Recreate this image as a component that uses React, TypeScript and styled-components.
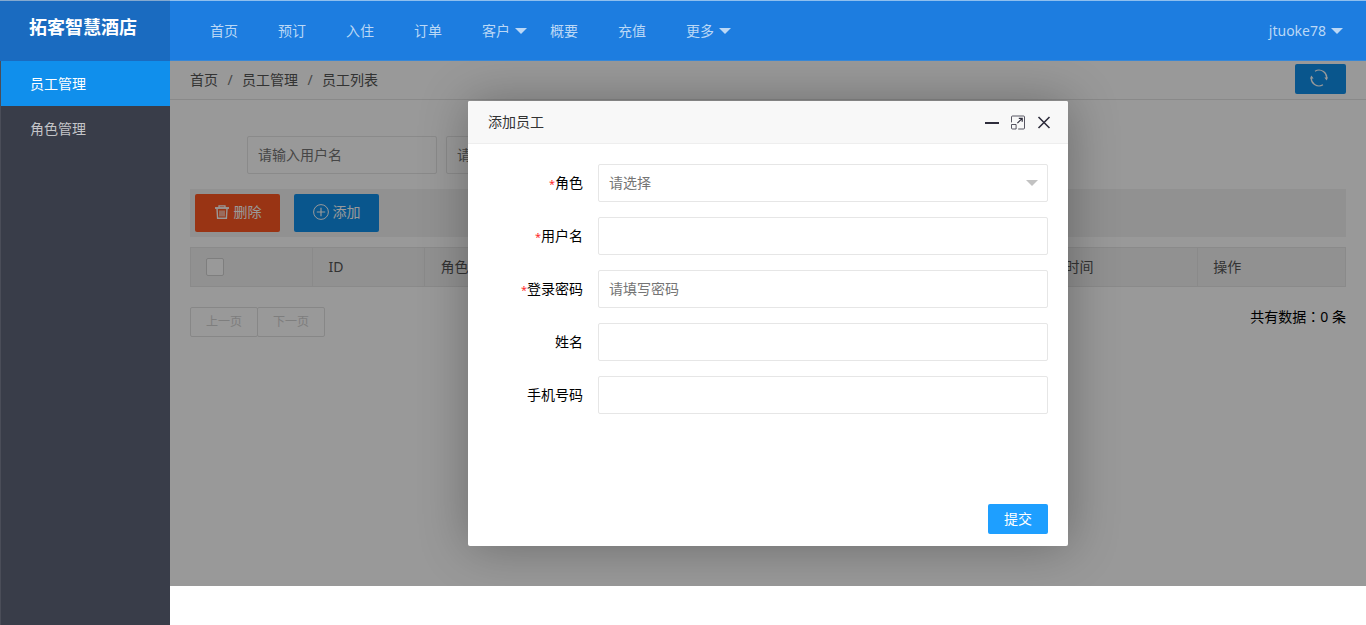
import React from "react";
import styled, { createGlobalStyle } from "styled-components";

const GlobalStyle = createGlobalStyle`
  *, *::before, *::after { box-sizing: border-box; }
  body {
    margin: 0;
    background: #fff;
    color: #000;
    font-family: "Noto Sans", "Noto Sans CJK SC", sans-serif;
    font-size: 14px;
    line-height: 24px;
  }
  button, input, select { font: inherit; margin: 0; }
  a { color: inherit; text-decoration: none; }
  ul, ol { list-style: none; margin: 0; padding: 0; }
`;

const Page = styled.div`
  display: grid;
  grid-template-columns: 170px minmax(0, 1fr);
  grid-template-rows: 61px minmax(525px, 1fr) 39px;
  min-height: 100vh;
`;

const Logo = styled.div`
  padding: 12px 29px 0;
  border-top: 1px solid #84a9cf;
  background: #1a6bc0;
  color: #fff;
  font-size: 18px;
  font-weight: 700;
  line-height: 28px;
  white-space: nowrap;
`;

const Header = styled.header`
  display: flex;
  justify-content: space-between;
  border-top: 1px solid #8fbfee;
  border-bottom: 1px solid #3787d6;
  background: #1d7de0;
  color: #bbd8f6;
`;

const NavList = styled.ul`
  display: flex;
  padding: 0 20px;
`;

const NavLink = styled.a<{ $more?: boolean }>`
  display: flex;
  align-items: center;
  gap: 5px;
  height: 100%;
  padding: 0 ${(p) => (p.$more ? 3 : 20)}px 0 20px;
`;

const Sidebar = styled.nav`
  grid-row: 2 / 4;
  border-left: 1px solid #4a4d58;
  background: #393d49;
`;

const SideLink = styled.a<{ $active?: boolean }>`
  display: block;
  padding: 0 29px;
  background: ${(p) => (p.$active ? "#108fec" : "transparent")};
  color: ${(p) => (p.$active ? "#fff" : "#c4c5c8")};
  line-height: 45px;
`;

const Content = styled.main`
  position: relative;
  overflow: hidden;
  background: #fff;
`;

const CrumbBar = styled.div`
  display: flex;
  justify-content: space-between;
  align-items: flex-start;
  height: 39px;
  padding: 3px 20px 0;
  border-bottom: 1px solid #e5e5e5;
`;

const Crumbs = styled.ol`
  display: flex;
  color: #555;
  line-height: 32px;

  li + li::before {
    content: "/";
    display: inline-block;
    width: 24px;
    text-align: center;
    color: #777;
  }
`;

const RefreshButton = styled.button`
  display: flex;
  align-items: center;
  justify-content: center;
  width: 51px;
  height: 30px;
  padding: 0 3px 2px 0;
  border: 0;
  border-radius: 2px;
  background: #1090ec;
  color: #fff;
`;

const Body = styled.div`
  padding: 36px 20px 20px;
`;

const SearchForm = styled.form`
  display: flex;
  gap: 9px;
  padding: 0 57px;
`;

const Field = styled.input`
  height: 38px;
  padding: 0 10px 2px;
  border: 1px solid #e6e6e6;
  border-radius: 2px;
  background: #fff;
  color: #333;
  &::placeholder { color: #757575; opacity: 1; }
`;

const SearchField = styled(Field)`
  width: 190px;
`;

const Toolbar = styled.div`
  display: flex;
  gap: 14px;
  margin: 15px 0 10px;
  padding: 5px;
  background: #f2f2f2;
`;

const ToolButton = styled.button<{ $danger?: boolean }>`
  display: flex;
  align-items: center;
  justify-content: center;
  gap: 4px;
  width: 85px;
  height: 38px;
  padding: 0 0 2px;
  border: 0;
  border-radius: 2px;
  background: ${(p) => (p.$danger ? "#ff5722" : "#1090ec")};
  color: #fff;
`;

const Table = styled.table`
  width: 100%;
  table-layout: fixed;
  border-collapse: collapse;
  background: #f2f2f2;
  color: #555;
`;

const HeadCell = styled.th`
  height: 39px;
  padding: 0 15px;
  border: 1px solid #e6e6e6;
  font-weight: 400;
  text-align: left;
`;

const Check = styled.input`
  display: block;
  appearance: none;
  width: 18px;
  height: 18px;
  margin: 0;
  border: 1px solid #d2d2d2;
  border-radius: 2px;
  background: #fff;
`;

const TableFooter = styled.div`
  display: flex;
  justify-content: space-between;
  align-items: flex-start;
  padding-top: 20px;
`;

const Pager = styled.div`
  display: flex;
`;

const PageButton = styled.button`
  width: 68px;
  height: 30px;
  padding: 0;
  border: 1px solid #e2e2e2;
  border-radius: 2px;
  background: #fff;
  color: #d2d2d2;
  font-size: 12px;
  & + & { margin-left: -1px; }
`;

const Total = styled.span`
  font-family: "Noto Sans", "Noto Sans CJK TC", sans-serif;
  line-height: 20px;
`;

const Mask = styled.div`
  position: absolute;
  inset: 0;
  display: flex;
  align-items: center;
  justify-content: center;
  background: rgba(0, 0, 0, 0.4);
`;

const Dialog = styled.section`
  display: flex;
  flex-direction: column;
  width: 600px;
  min-height: 445px;
  border-radius: 2px;
  background: #fff;
  box-shadow: 1px 1px 50px rgba(0, 0, 0, 0.3);
`;

const DialogHead = styled.div`
  display: flex;
  align-items: center;
  justify-content: space-between;
  height: 43px;
  padding: 0 15px 0 20px;
  border-bottom: 1px solid #eee;
  border-radius: 2px 2px 0 0;
  background: #f8f8f8;
`;

const DialogTitle = styled.h2`
  margin: 0;
  color: #333;
  font-size: 14px;
  font-weight: 400;
`;

const WindowButtons = styled.div`
  display: flex;
  gap: 8px;
`;

const WindowButton = styled.button`
  display: flex;
  width: 18px;
  height: 18px;
  padding: 0;
  border: 0;
  background: none;
  color: #2e2d3c;
`;

const DialogForm = styled.form`
  display: flex;
  flex: 1;
  flex-direction: column;
  gap: 15px;
  padding: 20px 20px 12px;
`;

const FormRow = styled.div`
  display: grid;
  grid-template-columns: 95px minmax(0, 1fr);
  column-gap: 15px;
  align-items: center;
`;

const Label = styled.label`
  text-align: right;
`;

const Required = styled.span`
  color: #ff2a2a;
  font-size: 11px;
`;

const SelectBox = styled.div`
  display: grid;
  align-items: center;

  > * { grid-area: 1 / 1; }
  > svg { justify-self: end; margin-right: 10px; color: #c2c2c2; pointer-events: none; }
`;

const Select = styled.select`
  appearance: none;
  width: 100%;
  height: 38px;
  padding: 0 10px 1px;
  border: 1px solid #e6e6e6;
  border-radius: 2px;
  background: #fff;
  color: #757575;
`;

const Submit = styled.button`
  align-self: flex-end;
  width: 60px;
  height: 30px;
  margin-top: auto;
  padding: 0 0 1px;
  border: 0;
  border-radius: 2px;
  background: #1e9fff;
  color: #fff;
`;

const Caret = () => (
  <svg width="12" height="6" viewBox="0 0 12 6" fill="currentColor" aria-hidden="true">
    <path d="M0 0h12L6 6z" />
  </svg>
);

const RefreshIcon = () => (
  <svg width="18" height="18" viewBox="0 0 18 18" fill="none" stroke="currentColor" strokeWidth="1.2" aria-hidden="true">
    <path d="M5 2.2A7.8 7.8 0 0 1 16.6 10.4M13 15.8A7.8 7.8 0 0 1 1.4 7.6" />
    <path d="M14.4 8.4l2.2 3.2 1.2-3.4zM3.6 9.6L1.4 6.4.2 9.8z" fill="currentColor" stroke="none" />
  </svg>
);

const TrashIcon = () => (
  <svg width="16" height="16" viewBox="0 0 16 16" fill="none" stroke="currentColor" aria-hidden="true">
    <path d="M1 4h14" strokeWidth="1.8" />
    <path d="M5 3.4V1.9h6v1.5" strokeWidth="1.3" />
    <path d="M3 4.5l.6 9.8h8.8l.6-9.8" strokeWidth="1.4" />
    <path d="M6 6.4v6M8 6.4v6M10 6.4v6" strokeWidth="1.1" />
  </svg>
);

const PlusCircleIcon = () => (
  <svg width="16" height="16" viewBox="0 0 16 16" fill="none" stroke="currentColor" aria-hidden="true">
    <circle cx="8" cy="8" r="7.4" />
    <path d="M8 3.8v8.4M3.8 8h8.4" strokeWidth="1.2" />
  </svg>
);

const MinimizeIcon = () => (
  <svg width="18" height="18" viewBox="0 0 18 18" aria-hidden="true">
    <path d="M2 9h14v2H2z" fill="currentColor" />
  </svg>
);

const MaximizeIcon = () => (
  <svg width="18" height="18" viewBox="0 0 18 18" fill="none" stroke="currentColor" aria-hidden="true">
    <g strokeOpacity="0.8">
      <path d="M2.5 9.4V4a1 1 0 0 1 1-1h11a1 1 0 0 1 1 1v11a1 1 0 0 1-1 1H9.2" />
      <path d="M2.5 11.5h4.6V16H3.5a1 1 0 0 1-1-1z" />
    </g>
    <path d="M8.4 10.2l4.6-4.6M9.8 5.3h3.4v3.4" strokeWidth="1.2" />
  </svg>
);

const CloseIcon = () => (
  <svg width="18" height="18" viewBox="0 0 18 18" fill="none" stroke="currentColor" strokeWidth="1.6" aria-hidden="true">
    <path d="M3.5 4l11 11M14.5 4l-11 11" />
  </svg>
);

const navItems = [
  { label: "首页" },
  { label: "预订" },
  { label: "入住" },
  { label: "订单" },
  { label: "客户", more: true },
  { label: "概要" },
  { label: "充值" },
  { label: "更多", more: true },
];

const columns = [
  { label: "ID", width: "9.7%" },
  { label: "角色", width: "13%" },
  { label: "用户名", width: "13%" },
  { label: "姓名", width: "12%" },
  { label: "手机号码" },
  { label: "添加时间", width: "15.2%" },
  { label: "操作", width: "12.8%" },
];

const formFields = [
  { id: "username", label: "用户名", required: true },
  { id: "password", label: "登录密码", required: true, placeholder: "请填写密码", type: "password" },
  { id: "realname", label: "姓名" },
  { id: "mobile", label: "手机号码" },
];

export default function App() {
  return (
    <>
      <GlobalStyle />
      <Page>
        <Logo>拓客智慧酒店</Logo>
        <Header>
          <NavList>
            {navItems.map((item) => (
              <li key={item.label}>
                <NavLink href="#" $more={item.more}>
                  {item.label}
                  {item.more && <Caret />}
                </NavLink>
              </li>
            ))}
          </NavList>
          <NavList>
            <li>
              <NavLink href="#" $more>
                jtuoke78
                <Caret />
              </NavLink>
            </li>
          </NavList>
        </Header>
        <Sidebar>
          <SideLink href="#" $active>员工管理</SideLink>
          <SideLink href="#">角色管理</SideLink>
        </Sidebar>
        <Content>
          <CrumbBar>
            <Crumbs>
              <li><a href="#">首页</a></li>
              <li><a href="#">员工管理</a></li>
              <li><a href="#">员工列表</a></li>
            </Crumbs>
            <RefreshButton type="button" aria-label="刷新"><RefreshIcon /></RefreshButton>
          </CrumbBar>
          <Body>
            <SearchForm>
              <SearchField aria-label="用户名" placeholder="请输入用户名" />
              <SearchField aria-label="手机号" placeholder="请输入手机号" />
            </SearchForm>
            <Toolbar>
              <ToolButton type="button" $danger><TrashIcon />删除</ToolButton>
              <ToolButton type="button"><PlusCircleIcon />添加</ToolButton>
            </Toolbar>
            <Table>
              <colgroup>
                <col style={{ width: "10.6%" }} />
                {columns.map((c) => <col key={c.label} style={{ width: c.width }} />)}
              </colgroup>
              <thead>
                <tr>
                  <HeadCell><Check type="checkbox" aria-label="全选" /></HeadCell>
                  {columns.map((c) => <HeadCell key={c.label}>{c.label}</HeadCell>)}
                </tr>
              </thead>
            </Table>
            <TableFooter>
              <Pager>
                <PageButton type="button" disabled>上一页</PageButton>
                <PageButton type="button" disabled>下一页</PageButton>
              </Pager>
              <Total>共有数据：0 条</Total>
            </TableFooter>
          </Body>
          <Mask>
            <Dialog role="dialog" aria-labelledby="dialog-title">
              <DialogHead>
                <DialogTitle id="dialog-title">添加员工</DialogTitle>
                <WindowButtons>
                  <WindowButton type="button" aria-label="最小化"><MinimizeIcon /></WindowButton>
                  <WindowButton type="button" aria-label="最大化"><MaximizeIcon /></WindowButton>
                  <WindowButton type="button" aria-label="关闭"><CloseIcon /></WindowButton>
                </WindowButtons>
              </DialogHead>
              <DialogForm>
                <FormRow>
                  <Label htmlFor="role"><Required>*</Required>角色</Label>
                  <SelectBox>
                    <Select id="role" defaultValue="">
                      <option value="">请选择</option>
                    </Select>
                    <Caret />
                  </SelectBox>
                </FormRow>
                {formFields.map((f) => (
                  <FormRow key={f.id}>
                    <Label htmlFor={f.id}>
                      {f.required && <Required>*</Required>}
                      {f.label}
                    </Label>
                    <Field id={f.id} type={f.type || "text"} placeholder={f.placeholder} />
                  </FormRow>
                ))}
                <Submit type="button">提交</Submit>
              </DialogForm>
            </Dialog>
          </Mask>
        </Content>
      </Page>
    </>
  );
}
